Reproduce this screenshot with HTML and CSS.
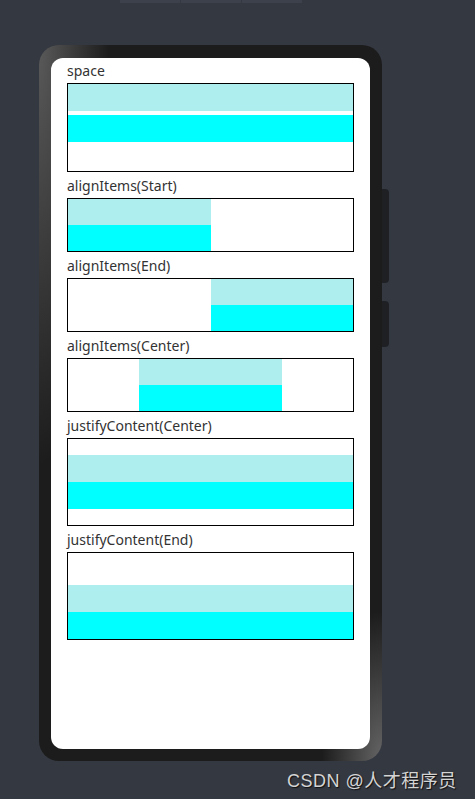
FILE: index.html
```html
<!DOCTYPE html>
<html lang="en">
  <head>
    <meta charset="UTF-8" />
    <meta name="viewport" content="width=device-width, initial-scale=1.0" />
    <title>Flex Demo</title>
    <link rel="stylesheet" href="styles.css">
  </head>
  <body>
    <div class="tabs">
      <span class="tab"></span>
      <span class="tab"></span>
      <span class="tab"></span>
    </div>

    <div class="phone">
      <span class="side-btn btn-power"></span>
      <span class="side-btn btn-volume"></span>

      <div class="screen">
        <div class="section">
          <div class="label">space</div>
          <div class="box box-tall column-space">
            <div class="item light full"></div>
            <div class="item cyan full"></div>
          </div>
        </div>

        <div class="section">
          <div class="label">alignItems(Start)</div>
          <div class="box box-short align-start">
            <div class="item light half"></div>
            <div class="item cyan half"></div>
          </div>
        </div>

        <div class="section">
          <div class="label">alignItems(End)</div>
          <div class="box box-short align-end">
            <div class="item light half"></div>
            <div class="item cyan half"></div>
          </div>
        </div>

        <div class="section">
          <div class="label">alignItems(Center)</div>
          <div class="box box-short align-center">
            <div class="item light half"></div>
            <div class="item cyan half"></div>
          </div>
        </div>

        <div class="section">
          <div class="label">justifyContent(Center)</div>
          <div class="box box-mid justify-center">
            <div class="item light full tall"></div>
            <div class="item cyan full tall"></div>
          </div>
        </div>

        <div class="section">
          <div class="label">justifyContent(End)</div>
          <div class="box box-mid justify-end">
            <div class="item light full tall"></div>
            <div class="item cyan full tall"></div>
          </div>
        </div>
      </div>
    </div>

    <div class="watermark">CSDN @人才程序员</div>
  </body>
</html>
```

FILE: styles.css
```css
body {
  margin: 0;
  height: 799px;
  overflow: hidden;
  background-color: #343841;
  font-family: "Noto Sans", "Noto Sans CJK SC", sans-serif;
  position: relative;
}

/* simulator tabs at the very top */

.tabs {
  display: flex;
  gap: 1px;
  height: 3px;
  margin-left: 120px;
}

.tab {
  width: 60px;
  background-color: #3d414b;
}

/* device frame */

.phone {
  position: relative;
  width: 319px;
  height: 691px;
  margin: 42px 0 0 39px;
  padding: 13px 12px 12px 12px;
  border-radius: 20px;
  background-color: #1c1c1c;
  background-image:
    radial-gradient(ellipse 70px 420px at 0 0, rgba(140, 140, 140, 0.55), transparent),
    radial-gradient(ellipse 60px 150px at 100% 100%, rgba(150, 150, 150, 0.6), transparent);
}

.side-btn {
  position: absolute;
  right: -7px;
  width: 7px;
  border-radius: 0 4px 4px 0;
  background-color: #1f2024;
}

.btn-power {
  top: 144px;
  height: 94px;
}

.btn-volume {
  top: 256px;
  height: 46px;
}

.screen {
  height: 100%;
  box-sizing: border-box;
  padding: 4px 16px 0 16px;
  border-radius: 12px;
  background-color: #fff;
  display: flex;
  flex-direction: column;
  gap: 5px;
}

/* demo rows */

.label {
  font-size: 14px;
  line-height: 18px;
  margin-bottom: 3px;
  color: #333;
}

.box {
  border: 1px solid #000;
  display: flex;
  flex-direction: column;
}

.box-tall {
  height: 87px;
}

.box-short {
  height: 52px;
}

.box-mid {
  height: 86px;
}

.item {
  height: 26px;
}

.item.tall,
.column-space .item {
  height: 27px;
}

.full {
  width: 100%;
}

.half {
  width: 50%;
}

.light {
  background-color: #afeeee;
}

.cyan {
  background-color: #00ffff;
}

.column-space {
  gap: 4px;
}

.align-start {
  align-items: flex-start;
}

.align-end {
  align-items: flex-end;
}

.align-center {
  align-items: center;
}

.justify-center {
  justify-content: center;
}

.justify-end {
  justify-content: flex-end;
}

/* watermark */

.watermark {
  position: absolute;
  left: 287px;
  top: 766px;
  font-family: "Liberation Sans", "Noto Sans CJK SC", sans-serif;
  font-size: 18px;
  letter-spacing: 0.5px;
  color: #d4d4d4;
  text-shadow: 1px 1px 1px #111;
}
```
